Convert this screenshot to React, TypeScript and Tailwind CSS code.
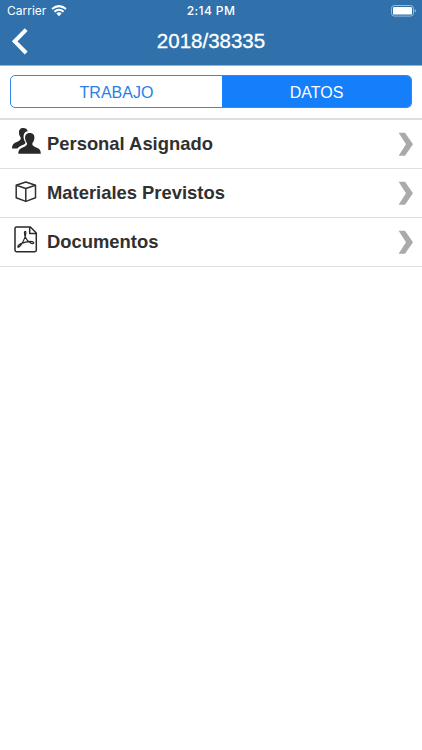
import React from 'react';

interface RowProps {
  label: string;
  icon: React.ReactNode;
}

function PeopleIcon() {
  return (
    <svg className="-mt-[4px]" width="30" height="28" viewBox="0 0 30 28" fill="#292929">
      <path d="M11.3 0C8.1 0 6.8 2 7 5C7.1 6.9 7.8 8.3 8.7 9.6C9.1 12 8 12.7 4.8 14C1.4 15.4 .2 16.8 0 20.4H5.4C6.4 18.9 8.5 17.8 11.4 16.7C13.3 15.9 13.7 15.2 13.2 14C11.6 11.6 11 8.4 12 5.9C12.7 4.3 13.9 3.5 15.8 3.2C15.2 1 13.6 0 11.3 0Z" />
      <path d="M17.8 4.9C14.4 4.9 12.9 7.1 13.1 10.2C13.2 12.2 14.2 14 15 15.1C15.4 17.3 14.1 18.2 10.8 19.5C7.6 20.8 6.4 22.2 6.3 25.8H28.8C28.8 22.2 27.5 20.8 24.2 19.5C21 18.2 19.9 17.3 20.4 15.1C21.3 14 22.2 12.2 22.4 10.2C22.7 7.1 21.2 4.9 17.8 4.9Z" />
    </svg>
  );
}

function BoxIcon() {
  return (
    <svg className="-mt-[2px] ml-[3px]" width="22" height="22" viewBox="0 0 22 22" fill="none" stroke="#303030" strokeWidth="1.5" strokeLinejoin="round">
      <path d="M10.8 1L20.5 4.3V16.8L10.8 20.4L1.2 16.8V4.3Z" />
      <path d="M1.2 4.3L10.8 7.5L20.5 4.3M10.8 7.5V20.4" />
    </svg>
  );
}

function PdfIcon() {
  return (
    <svg className="-mt-[5px] ml-[2px]" width="24" height="27" viewBox="0 0 24 27" fill="none" stroke="#292929" strokeLinejoin="round">
      <path d="M2.5 1H16.4L22.3 7V24.3Q22.3 25.7 20.9 25.7H2.5Q1 25.7 1 24.3V2.5Q1 1 2.5 1Z" strokeWidth="1.5" />
      <path d="M15.7 1.3V7.5H22" strokeWidth="1.5" />
      <path
        d="M11.2 5.3C10 5.3 10.4 8.7 11.3 11.1C12.4 13.7 14.3 15.9 16.5 17C18.5 18 20 17.6 19.8 16.6C19.4 15.3 14.8 15.4 11.6 16.1C8.1 17 4 19 3.8 20.6C3.7 21.6 5.2 21.5 7 18.9C8.8 16.4 10.1 13.7 10.9 11.4C12 8.2 12.2 5.3 11.2 5.3Z"
        strokeWidth="1.2"
      />
    </svg>
  );
}

function Row({ label, icon }: RowProps) {
  return (
    <button className="flex h-[49px] w-full items-center border-b border-[#dfdfdf] pr-[8px] pl-[12px] text-left">
      <span className="flex w-[35px] shrink-0">{icon}</span>
      <span className="text-[18.4px] leading-[24px] font-bold whitespace-nowrap text-[#303030]">{label}</span>
      <svg className="ml-auto" width="16" height="24" viewBox="0 0 16 24" fill="#aaaaaa">
        <path d="M.6 .7H7L15 12.2L7 23.7H.6L8 12.2Z" />
      </svg>
    </button>
  );
}

function StatusBar() {
  return (
    <div className="grid h-[22px] grid-cols-3 items-center font-[Inter,sans-serif] text-[12px] leading-[22px] text-white">
      <div className="flex items-center gap-[4.5px] pl-[7px]">
        <span>Carrier</span>
        <svg width="16" height="12" viewBox="0 0 16 12" fill="none" stroke="white" strokeWidth="2">
          <path d="M1 4.1Q8 -1.9 15 4.1M3.4 6.8Q8 2.8 12.6 6.8" />
          <path d="M8 7.3Q9.5 7.3 10.6 8.5L8 11.2L5.4 8.5Q6.5 7.3 8 7.3Z" fill="white" stroke="none" />
        </svg>
      </div>
      <span className="text-center font-medium tracking-[0.4px]">2:14 PM</span>
      <svg className="mr-[6px] -mt-px ml-auto" width="26" height="12" viewBox="0 0 26 12">
        <rect x="1.5" y=".5" width="22" height="10.6" rx="2.8" fill="none" stroke="#98b9d7" />
        <rect x="3" y="2" width="19" height="7.6" rx="1.2" fill="white" />
        <path d="M24.6 4Q26 4.4 26 5.8Q26 7.2 24.6 7.6Z" fill="#98b9d7" />
      </svg>
    </div>
  );
}

export default function App() {
  return (
    <div className="min-h-screen bg-white font-['Liberation_Sans',Arial,sans-serif]">
      <header className="h-[66px] border-b border-[#90b5d8] bg-[#3071ac]">
        <StatusBar />
        <div className="grid h-[43px] grid-cols-[1fr_auto_1fr] items-start">
          <button className="pt-[6px] pl-[11px]" aria-label="Volver">
            <svg width="18" height="27" viewBox="0 0 18 27" fill="none" stroke="white" strokeWidth="4">
              <path d="M15.2 1.7L3.7 13.3L15.2 25" />
            </svg>
          </button>
          <h1 className="pt-[6px] text-[20.5px] leading-[26px] text-white [-webkit-text-stroke:0.3px_white]">2018/38335</h1>
        </div>
      </header>

      <div className="h-[54px] border-b-2 border-[#dedede] pt-[9px] pr-[10px] pl-[10px]">
        <div className="flex h-[33px] overflow-hidden rounded-[5px] border border-[#3988e7] text-[16px] leading-[33px]">
          <button className="w-[211px] text-[#267fe8]">TRABAJO</button>
          <button className="flex-1 bg-[#147efb] text-white">DATOS</button>
        </div>
      </div>

      <main>
        <Row label="Personal Asignado" icon={<PeopleIcon />} />
        <Row label="Materiales Previstos" icon={<BoxIcon />} />
        <Row label="Documentos" icon={<PdfIcon />} />
      </main>
    </div>
  );
}
